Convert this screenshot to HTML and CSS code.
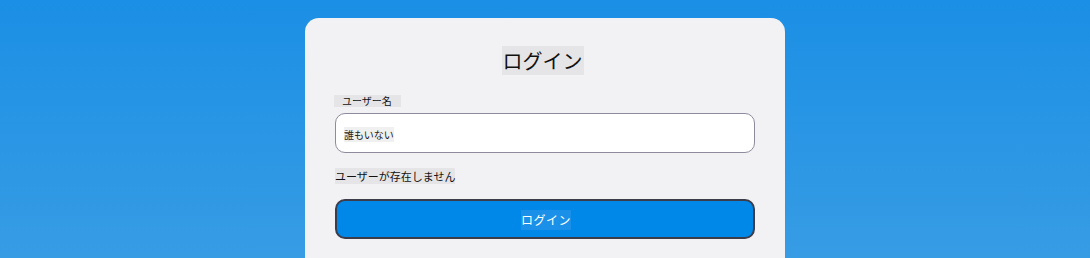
FILE: index.html
```html
<!DOCTYPE html>
<html lang="ja">
<head>
    <meta charset="UTF-8">
    <meta name="viewport" content="width=device-width, initial-scale=1.0">
    <title>ログイン</title>
    <link rel="stylesheet" href="styles.css">
</head>
<body>
    <div class="login-card">
        <h2 class="title"><span>ログイン</span></h2>
        <label class="field-label" for="username">ユーザー名</label>
        <div class="input-box" id="username">
            <span class="input-value">誰もいない</span>
        </div>
        <p class="error"><span>ユーザーが存在しません</span></p>
        <button class="login-button"><span>ログイン</span></button>
    </div>
</body>
</html>
```

FILE: styles.css
```css
html, body {
    margin: 0;
    height: 100%;
}
body {
    font-family: "Noto Sans CJK JP", "Noto Sans", sans-serif;
    background: linear-gradient(180deg, #1b8fe5 0px, #379ce4 258px);
    display: flex;
    justify-content: center;
    padding-top: 18px;
    box-sizing: border-box;
    overflow: hidden;
}
.login-card {
    width: 480px;
    box-sizing: border-box;
    background: #f2f2f4;
    border-radius: 14px 14px 0 0;
    padding: 29px 30px 0;
    display: flex;
    flex-direction: column;
    align-items: flex-start;
    height: 240px;
}
.title {
    align-self: stretch;
    text-align: center;
    margin: 0 0 21px;
    font-size: 20px;
    font-weight: normal;
    line-height: 27px;
    color: #111;
    padding-right: 5px;
}
.title span {
    background: #e5e5e7;
    padding: 0 1px;
}
.field-label {
    font-size: 10px;
    line-height: 12px;
    padding: 0 9px 0 8px;
    margin-left: -1px;
    background: #e5e5e7;
    color: #111;
    margin-bottom: 6px;
}
.input-box {
    align-self: stretch;
    height: 40px;
    box-sizing: border-box;
    background: #fff;
    border: 1px solid #8f8b9c;
    border-radius: 10px;
    display: flex;
    align-items: center;
    padding: 0 8px;
    margin-bottom: 16px;
}
.input-value {
    font-size: 10px;
    line-height: 15px;
    background: #f0f0f0;
    color: #222;
    margin-top: 2px;
}
.error {
    margin: 0 0 15px;
    font-size: 11px;
    line-height: 15px;
    color: #111;
}
.error span {
    background: #e5e5e7;
}
.login-button {
    align-self: stretch;
    height: 40px;
    background: #0088e8;
    border: 2px solid #3c3c4a;
    border-radius: 10px;
    color: #fff;
    font-family: inherit;
    font-size: 12px;
    letter-spacing: 0.5px;
    cursor: pointer;
    padding: 0;
}
.login-button span {
    background: #1a90e8;
    padding: 1px 0 2px;
    margin-left: 2px;
}
```
